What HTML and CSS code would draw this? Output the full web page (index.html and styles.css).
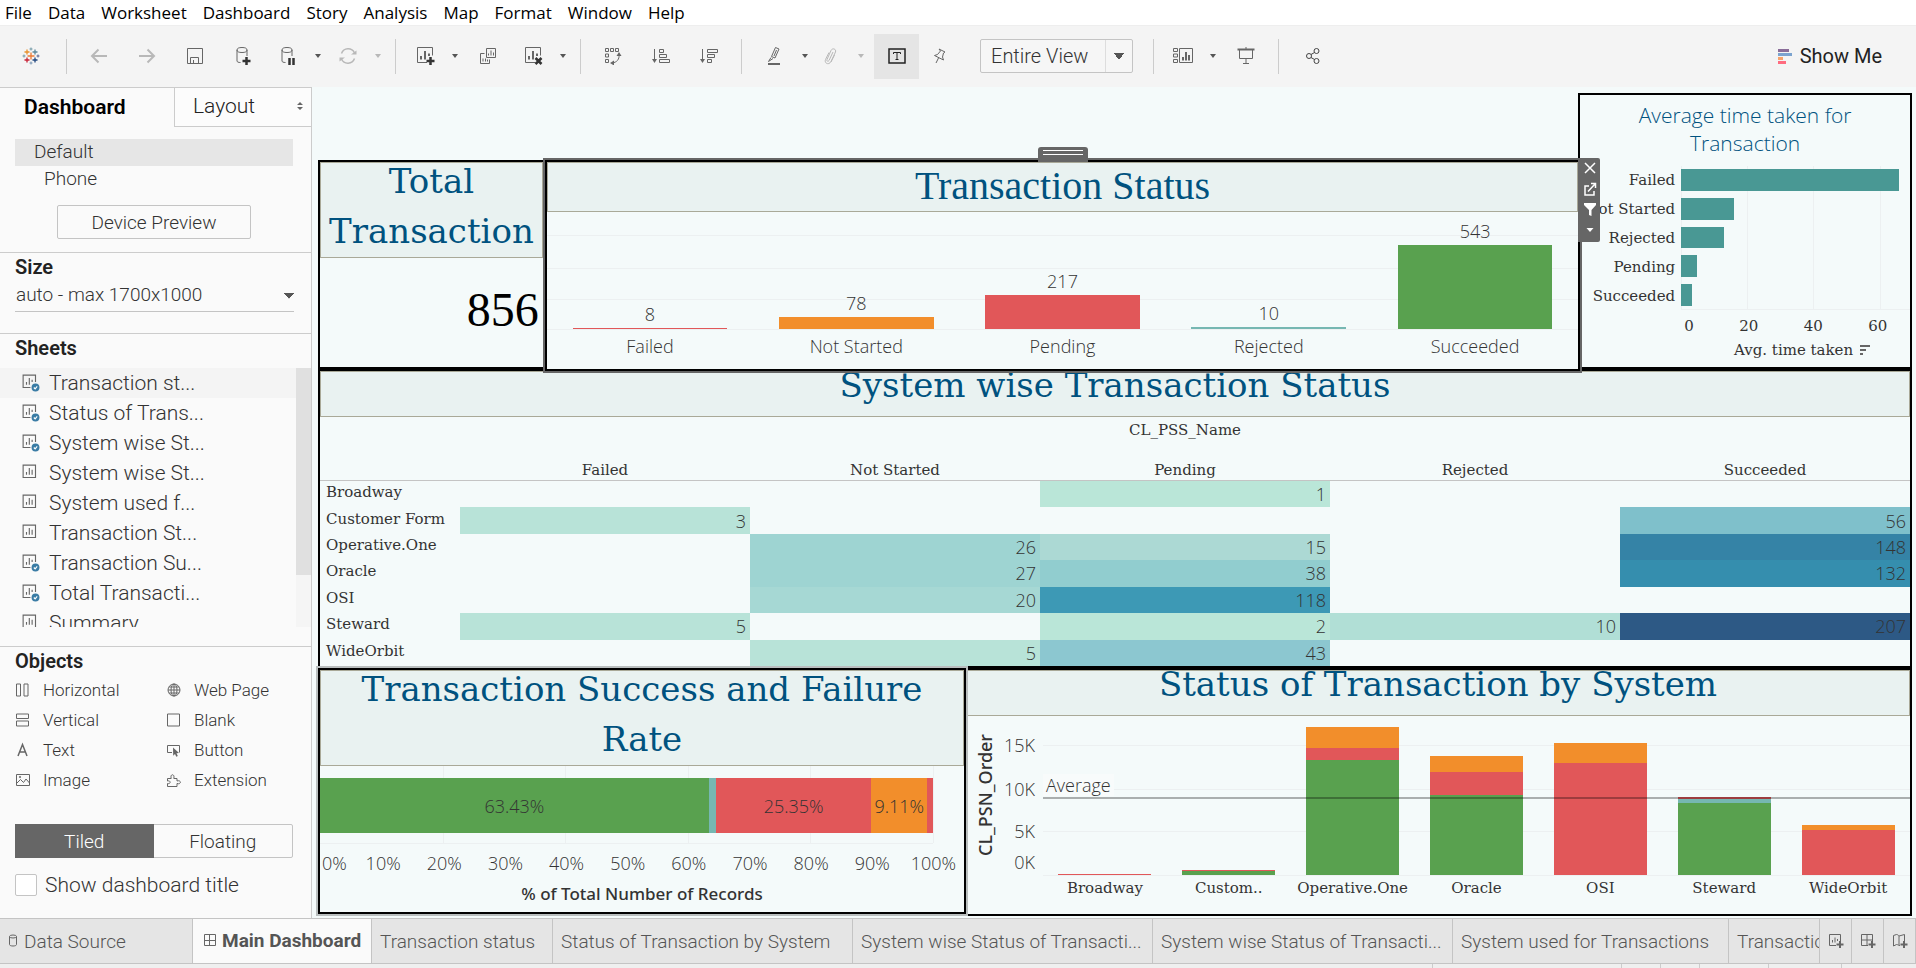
FILE: index.html
```html
<!DOCTYPE html>
<html lang="en">
<head>
<meta charset="utf-8">
<title>Main Dashboard</title>
<link rel="stylesheet" href="styles.css">
</head>
<body>
<svg class="defs" aria-hidden="true">
  <symbol id="i-sheet" viewBox="0 0 16 16"><path d="M1 1h11v11H1zM4 9.500V7M6.500 9.500V3.500M9 9.500V5"/></symbol>
  <symbol id="i-sheet-used" viewBox="0 0 16 16"><path d="M7.500 12H1V1h11v6M4 9.500V7M6.500 9.500V3.500M9 7V5"/><circle class="badge" cx="12" cy="12" r="3.500"/><path class="tick" d="M10.500 12l1.200 1.200 1.800-2.200"/></symbol>
  <symbol id="i-chart" viewBox="0 0 20 20"><path d="M12 16.500H2.500v-15h15v8"/><path stroke-width="2" d="M6 13.500V10M10 13.500V5M14 10V7.500"/></symbol>
</svg>
<div class="app">
  <nav class="menu">
    <a href="#">File</a><a href="#">Data</a><a href="#">Worksheet</a><a href="#">Dashboard</a><a href="#">Story</a><a href="#">Analysis</a><a href="#">Map</a><a href="#">Format</a><a href="#">Window</a><a href="#">Help</a>
  </nav>

  <header class="toolbar">
    <button class="tool logo" aria-label="Start page"><svg width="18" height="18" viewBox="0 0 18 18">
      <path stroke="#eb7a34" stroke-width="1.300" d="M9 5.500v7M5.500 9h7"/><path stroke="#e8912d" stroke-width="1.300" d="M5 2.500v5M2.500 5h5"/><path stroke="#5b879b" stroke-width="1.300" d="M13 2.500v5M10.500 5h5"/><path stroke="#c72035" stroke-width="1.300" d="M5 10.500v5M2.500 13h5"/><path stroke="#1f457e" stroke-width="1.300" d="M13 10.500v5M10.500 13h5"/><path stroke="#7199a6" d="M9 .5v3M7.500 2h3M2 7.500v3M.5 9h3"/><path stroke="#5b6591" d="M16 7.500v3M14.500 9h3"/><path stroke="#7a96b4" d="M9 14.500v3M7.500 16h3"/></svg></button>
    <i class="sep"></i>
    <button class="tool off" aria-label="Undo"><svg width="18" height="16" viewBox="0 0 18 16"><path stroke-width="2" d="M17 8H2M8.500 1.500L2 8l6.500 6.500"/></svg></button>
    <button class="tool off" aria-label="Redo"><svg width="18" height="16" viewBox="0 0 18 16"><path stroke-width="2" d="M1 8h15M9.500 1.500L16 8l-6.500 6.500"/></svg></button>
    <button class="tool" aria-label="Save"><svg width="18" height="18" viewBox="0 0 18 18"><path d="M1.500 1.500h15v15h-15zM4.500 16v-5.500h8V16M7.500 16v-3"/></svg></button>
    <button class="tool" aria-label="New data source"><svg width="18" height="20" viewBox="0 0 18 20"><ellipse cx="8" cy="4" rx="5" ry="2.500"/><path d="M3 4v11c0 1 1.500 1.500 3.500 1.500M13 4v6"/><path class="heavy" d="M12.500 11v8M8.500 15h8"/></svg></button>
    <button class="tool mid" aria-label="Pause updates"><svg width="18" height="20" viewBox="0 0 18 20"><ellipse cx="8" cy="4" rx="5" ry="2.500"/><path d="M3 4v11c0 1 1.500 1.500 3.500 1.500M13 4v6"/><path class="heavy" d="M10.500 12v7M14.500 12v7"/></svg></button>
    <button class="caret" aria-label="Update options"></button>
    <button class="tool mid off" aria-label="Refresh"><svg width="18" height="18" viewBox="0 0 18 18"><path stroke-width="1.500" d="M2.500 6.500a7 7 0 0 1 13-.5M15.500 11.500a7 7 0 0 1-13 .5"/><path class="fill" d="M12 7.500h5.500v-4zM6 10.500H.5v4z"/></svg></button>
    <button class="caret off" aria-label="Refresh options"></button>
    <i class="sep"></i>
    <button class="tool mid" aria-label="New worksheet"><svg width="20" height="20" viewBox="0 0 20 20"><use href="#i-chart"/><path class="heavy" d="M15.500 11v8M11.500 15h8"/></svg></button>
    <button class="caret" aria-label="New options"></button>
    <button class="tool" aria-label="Duplicate"><svg width="18" height="18" viewBox="0 0 18 18"><path d="M7.500 1.500h9v9h-9zM9.500 8.500V6.500M12 8.500v-5M14.500 8.500v-3M5.500 6.500h-4v10h9v-4M4 14.500v-3M6.500 14.500v-3M8.500 14.500v-2"/></svg></button>
    <button class="tool mid" aria-label="Clear sheet"><svg width="20" height="20" viewBox="0 0 20 20"><use href="#i-chart"/><path class="heavy" d="M12.500 12l6 6M18.500 12l-6 6"/></svg></button>
    <button class="caret" aria-label="Clear options"></button>
    <i class="sep"></i>
    <button class="tool" aria-label="Swap rows and columns"><svg width="18" height="18" viewBox="0 0 18 18"><path d="M1.500 1.500h3v3h-3zM6.500 1.500h3v3h-3zM11.500 1.500h3v3h-3zM1.500 7h3v3h-3zM1.500 12.500h3v3h-3zM15 8c.5 4-2 7.500-7 8"/><path class="fill" d="M15 5l2.500 4h-5zM6 16l4-2.500v5z"/></svg></button>
    <button class="tool" aria-label="Sort ascending"><svg width="18" height="18" viewBox="0 0 18 18"><path d="M2.500 2v12M7.500 2.500h4v3h-4zM7.500 7.500h7v3h-7zM7.500 12.500h10v3h-10z"/><path class="fill" d="M0 12h5l-2.500 4z"/></svg></button>
    <button class="tool" aria-label="Sort descending"><svg width="18" height="18" viewBox="0 0 18 18"><path d="M2.500 2v12M7.500 2.500h10v3h-10zM7.500 7.500h7v3h-7zM7.500 12.500h4v3h-4z"/><path class="fill" d="M0 12h5l-2.500 4z"/></svg></button>
    <i class="sep"></i>
    <button class="tool wide" aria-label="Highlight"><svg width="18" height="20" viewBox="0 0 18 20"><path d="M9.500 1.500l3.500 1.500-4 9-3.500-1.500zM5 11.500l-2.500 4 4.500-3M10.500 4l-2.500 6"/><path stroke-width="2" d="M2 18h12"/></svg></button>
    <button class="caret slim" aria-label="Highlight options"></button>
    <button class="tool mid off" aria-label="Group members"><svg width="18" height="18" viewBox="0 0 18 18"><path d="M11 5l-4 8.500c-.8 1.500-2.800.7-2-1L9 3.500c1.500-3 5.500-1.500 4.500 1.500L9 14.500c-2 4-7 2-5.500-2L7 5.500M12.500 8L9 15"/></svg></button>
    <button class="caret off" aria-label="Group options"></button>
    <button class="tool pressed" aria-label="Show mark labels"><svg width="18" height="18" viewBox="0 0 18 18"><path d="M1 2h16v14H1z"/><path stroke-width="1" d="M5.500 7V5.500h7V7M9 5.500v7M7.500 12.500h3"/></svg></button>
    <button class="tool mid" aria-label="Fix axes"><svg width="16" height="18" viewBox="0 0 16 18"><path d="M7 2l6 3-1.500 1-1 4 1 3-9-4.500 3-1 3-3.500zM6.500 11L4 16"/></svg></button>
    <select class="fit" aria-label="Fit"><option>Entire View</option></select>
    <i class="sep"></i>
    <button class="tool mid" aria-label="Show cards"><svg width="20" height="18" viewBox="0 0 20 18"><path d="M.5 1.500h4v3h-4zM.5 7h4v3h-4zM.5 12.500h4v3h-4zM6.500 1.500h13v14h-13z"/><path stroke-width="2" d="M10 13.500V10M13 13.500V5M16 13.500V8"/></svg></button>
    <button class="caret" aria-label="Card options"></button>
    <button class="tool" aria-label="Presentation mode"><svg width="18" height="18" viewBox="0 0 18 18"><path d="M2.500 3v8.500h13V3M9 12v5M6 16.500h6M9 0v2"/><path stroke-width="2" d="M.5 2.500h17"/></svg></button>
    <i class="sep"></i>
    <button class="tool share" aria-label="Share"><svg width="16" height="18" viewBox="0 0 16 18"><circle cx="4" cy="9" r="2.500"/><circle cx="11.500" cy="4" r="2.500"/><circle cx="11.500" cy="14" r="2.500"/><path d="M6 7.500L9.500 5.500M6 10.500l3.500 2"/></svg></button>
    <button class="showme"><svg width="14" height="16" viewBox="0 0 14 16" shape-rendering="crispEdges"><path fill="#8a6d99" stroke="none" d="M0 1h11v3H0z"/><path fill="#7ba3cf" stroke="none" d="M0 5h14v3H0z"/><path fill="#f5a26b" stroke="none" d="M0 9h5v3H0z"/><path fill="#ff6b7f" stroke="none" d="M0 13h8v3H0z"/></svg>Show Me</button>
  </header>

  <div class="body">
    <aside class="side">
      <div class="tabs"><button class="tab on">Dashboard</button><button class="tab">Layout <svg width="6" height="8" viewBox="0 0 6 8"><path class="fill" d="M0 3l3-3 3 3zM0 5l3 3 3-3z"/></svg></button></div>
      <section class="devices">
        <div class="device on">Default</div>
        <div class="device sub">Phone</div>
        <button class="preview">Device Preview</button>
      </section>
      <section class="size">
        <h2>Size</h2>
        <select class="sizesel" aria-label="Size"><option>auto - max 1700x1000</option></select>
      </section>
      <section class="sheets">
        <h2>Sheets</h2>
        <div class="scroller">
          <ul>
            <li class="on"><svg width="18" height="18"><use href="#i-sheet-used"/></svg>Transaction st...</li>
            <li><svg width="18" height="18"><use href="#i-sheet-used"/></svg>Status of Trans...</li>
            <li><svg width="18" height="18"><use href="#i-sheet-used"/></svg>System wise St...</li>
            <li><svg width="18" height="18"><use href="#i-sheet"/></svg>System wise St...</li>
            <li><svg width="18" height="18"><use href="#i-sheet"/></svg>System used f...</li>
            <li><svg width="18" height="18"><use href="#i-sheet"/></svg>Transaction St...</li>
            <li><svg width="18" height="18"><use href="#i-sheet-used"/></svg>Transaction Su...</li>
            <li><svg width="18" height="18"><use href="#i-sheet-used"/></svg>Total Transacti...</li>
            <li><svg width="18" height="18"><use href="#i-sheet"/></svg>Summary</li>
          </ul>
          <div class="track"><div class="thumb"></div></div>
        </div>
      </section>
      <section class="objects">
        <h2>Objects</h2>
        <div class="objgrid">
          <div><svg width="16" height="16" viewBox="0 0 16 16"><path d="M1.500 2h4v12h-4zM9 2h4v12H9z"/></svg>Horizontal</div>
          <div><svg width="16" height="16" viewBox="0 0 16 16"><circle cx="8" cy="8" r="6"/><ellipse cx="8" cy="8" rx="3" ry="6"/><path d="M8 2v12M2 8h12M3 5h10M3 11h10"/></svg>Web Page</div>
          <div><svg width="16" height="16" viewBox="0 0 16 16"><path d="M1.500 2h12v4.500h-12zM1.500 9h12v5h-12z"/></svg>Vertical</div>
          <div><svg width="16" height="16" viewBox="0 0 16 16"><path d="M1.500 2h12v12h-12z"/></svg>Blank</div>
          <div><svg width="16" height="16" viewBox="0 0 16 16"><path stroke-width="1.500" d="M3 14L7.500 2.500 12 14M4.500 10h6"/></svg>Text</div>
          <div><svg width="16" height="16" viewBox="0 0 16 16"><path d="M6 10.500H1.500v-7h12v7"/><path class="fill" d="M7 5.500l6 5.500-2.500.3 1.300 2.700-1.500.7-1.300-2.700-1.800 1.700z"/></svg>Button</div>
          <div><svg width="16" height="16" viewBox="0 0 16 16"><path d="M1.500 2.500h13v11h-13zM2 11l3.500-3.500 3 3L11 7l3.500 4"/><circle cx="5" cy="5" r=".7"/></svg>Image</div>
          <div><svg width="16" height="16" viewBox="0 0 16 16"><path d="M1.500 6.500h3.700c-1.500-5 4-5 2.600 0H11V9c4.500-1.500 4.500 4 0 2.500v3H1.500v-3c3.500 1 3.500-3.500 0-2.500z"/></svg>Extension</div>
        </div>
        <div class="toggle"><button class="on">Tiled</button><button>Floating</button></div>
        <label class="check"><input type="checkbox">Show dashboard title</label>
      </section>
    </aside>

    <main class="canvas">
      <div class="top">
        <section class="panel total">
          <h3 class="double">Total<br>Transaction</h3>
          <p class="big">856</p>
        </section>
        <section class="panel status">
          <h3>Transaction Status</h3>
          <div class="plot">
            <i class="h" style="top:20%"></i><i class="h" style="top:47.500%"></i><i class="h" style="top:74%"></i><i class="h" style="top:100%"></i>
            <div class="col"><b>8</b><i class="bar red" style="height:1%"></i></div>
            <div class="col"><b>78</b><i class="bar orange" style="height:10.300%"></i></div>
            <div class="col"><b>217</b><i class="bar red" style="height:28.700%"></i></div>
            <div class="col"><b>10</b><i class="bar teal" style="height:1.700%"></i></div>
            <div class="col"><b>543</b><i class="bar green" style="height:72%"></i></div>
          </div>
          <div class="cats"><span>Failed</span><span>Not Started</span><span>Pending</span><span>Rejected</span><span>Succeeded</span></div>
          <div class="grip"></div>
          <div class="actions">
            <button aria-label="Remove"><svg width="14" height="14" viewBox="0 0 14 14"><path stroke-width="1.500" d="M2 2l10 10M12 2L2 12"/></svg></button>
            <button aria-label="Go to sheet"><svg width="14" height="14" viewBox="0 0 14 14"><path stroke-width="1.500" d="M6 4H2v9h9V9M5 9.500L12 2M8 1.500h4.500V6"/></svg></button>
            <button aria-label="Use as filter"><svg width="14" height="14" viewBox="0 0 14 14"><path class="fill" d="M1 1h12v2L8.500 8v6L6 13V8L1 3z"/></svg></button>
            <button aria-label="More options"><svg width="14" height="14" viewBox="0 0 14 14"><path class="fill" d="M3.500 5h7L7 9z"/></svg></button>
          </div>
        </section>
        <section class="panel average">
          <h4>Average time taken for<br>Transaction</h4>
          <div class="hchart">
            <div class="names"><span>Failed</span><span>Not Started</span><span>Rejected</span><span>Pending</span><span>Succeeded</span></div>
            <div class="hplot">
              <i class="v" style="left:0"></i><i class="v" style="left:28.800%"></i><i class="v" style="left:57.600%"></i><i class="v" style="left:87%"></i>
              <i class="hbar" style="width:95.200%"></i><i class="hbar" style="width:23.100%"></i><i class="hbar" style="width:18.800%"></i><i class="hbar" style="width:7%"></i><i class="hbar" style="width:4.800%"></i>
            </div>
          </div>
          <div class="haxis"><span class="zero">0</span><span>20</span><span>40</span><span>60</span></div>
          <div class="hname">Avg. time taken <svg width="12" height="12" viewBox="0 0 12 12"><path stroke-width="2" d="M1 2h10M1 6h6M1 10h3"/></svg></div>
        </section>
      </div>

      <section class="panel system">
        <h3 class="tight">System wise Transaction Status</h3>
        <table>
          <colgroup><col class="rowname"><col><col><col><col><col></colgroup>
          <thead>
            <tr class="dim"><th></th><th colspan="5">CL_PSS_Name</th></tr>
            <tr><th></th><th>Failed</th><th>Not Started</th><th>Pending</th><th>Rejected</th><th>Succeeded</th></tr>
          </thead>
          <tbody>
            <tr><th>Broadway</th><td></td><td></td><td class="c1">1</td><td></td><td></td></tr>
            <tr><th>Customer Form</th><td class="c2">3</td><td></td><td></td><td></td><td class="c9">56</td></tr>
            <tr><th>Operative.One</th><td></td><td class="c5">26</td><td class="c4">15</td><td></td><td class="c12">148</td></tr>
            <tr><th>Oracle</th><td></td><td class="c5">27</td><td class="c7">38</td><td></td><td class="c11">132</td></tr>
            <tr><th>OSI</th><td></td><td class="c6">20</td><td class="c10">118</td><td></td><td></td></tr>
            <tr><th>Steward</th><td class="c2">5</td><td></td><td class="c1">2</td><td class="c3">10</td><td class="c13">207</td></tr>
            <tr><th>WideOrbit</th><td></td><td class="c2">5</td><td class="c8">43</td><td></td><td></td></tr>
          </tbody>
        </table>
      </section>

      <div class="bottom">
        <section class="panel rate">
          <h3 class="double">Transaction Success and Failure<br>Rate</h3>
          <div class="rplot">
            <i class="v" style="left:20%"></i><i class="v" style="left:40%"></i><i class="v" style="left:60%"></i><i class="v" style="left:80%"></i><i class="v" style="left:100%"></i>
            <div class="stack"><span class="green" style="width:63.430%">63.43%</span><span class="teal" style="width:1.170%"></span><span class="red" style="width:25.350%">25.35%</span><span class="orange" style="width:9.110%">9.11%</span><span class="red" style="width:.940%"></span></div>
          </div>
          <div class="raxis"><span class="zero">0%</span><span>10%</span><span>20%</span><span>30%</span><span>40%</span><span>50%</span><span>60%</span><span>70%</span><span>80%</span><span>90%</span><span>100%</span></div>
          <div class="rname">% of Total Number of Records</div>
        </section>
        <section class="panel bysystem">
          <h3 class="tight">Status of Transaction by System</h3>
          <div class="sbody">
            <div class="yname">CL_PSN_Order</div>
            <div class="splot">
              <i class="h" style="top:18%"><em>15K</em></i><i class="h" style="top:45.600%"><em>10K</em></i><i class="h" style="top:72.500%"><em>5K</em></i><i class="h base" style="top:100%"><em>0K</em></i>
              <div class="col"><i class="bar red" style="height:.800%"></i></div>
              <div class="col"><i class="bar red" style="height:.700%"></i><i class="bar green" style="height:2.300%"></i></div>
              <div class="col"><i class="bar orange" style="height:13.200%"></i><i class="bar red" style="height:7.500%"></i><i class="bar green" style="height:72.500%"></i></div>
              <div class="col"><i class="bar orange" style="height:10%"></i><i class="bar red" style="height:14.300%"></i><i class="bar green" style="height:50.600%"></i></div>
              <div class="col"><i class="bar orange" style="height:12.500%"></i><i class="bar red" style="height:70.600%"></i></div>
              <div class="col"><i class="bar red" style="height:1.300%"></i><i class="bar teal" style="height:2.500%"></i><i class="bar green" style="height:45%"></i></div>
              <div class="col"><i class="bar orange" style="height:3.100%"></i><i class="bar red" style="height:28.100%"></i></div>
              <div class="avgline" style="bottom:47.500%"><span>Average</span></div>
            </div>
            <div class="scats"><span>Broadway</span><span>Custom..</span><span>Operative.One</span><span>Oracle</span><span>OSI</span><span>Steward</span><span>WideOrbit</span></div>
          </div>
        </section>
      </div>
    </main>
  </div>

  <footer class="sheetbar">
    <button class="source"><svg width="10" height="16" viewBox="0 0 10 16"><ellipse cx="5" cy="3.500" rx="3.500" ry="1.500"/><path d="M1.500 3.500v8c0 2 7 2 7 0v-8"/></svg>Data Source</button>
    <button class="main"><svg width="12" height="12" viewBox="0 0 12 12"><path d="M.5 .5h11v11H.5zM5.500 1v10M.5 6.500h11"/></svg>Main Dashboard</button>
    <button class="t1">Transaction status</button>
    <button class="t2">Status of Transaction by System</button>
    <button class="t2">System wise Status of Transacti...</button>
    <button class="t2">System wise Status of Transacti...</button>
    <button class="t3">System used for Transactions</button>
    <button class="t4">Transaction Success</button>
    <button class="add" aria-label="New worksheet"><svg width="16" height="16" viewBox="0 0 16 16"><path d="M8 12.500H1.500v-11h11V8M4.500 9.500V7M7 9.500V4.500M9.500 8V6"/><path stroke-width="2" d="M12 8v7M8.500 11.500h7"/></svg></button>
    <button class="add" aria-label="New dashboard"><svg width="16" height="16" viewBox="0 0 16 16"><path d="M8 12.500H1.500v-11h11V8M7 1.500v11M1.500 7h11"/><path stroke-width="2" d="M12 8v7M8.500 11.500h7"/></svg></button>
    <button class="add" aria-label="New story"><svg width="16" height="16" viewBox="0 0 16 16"><path d="M8 12.500c-2 0-2-1-3.500-1l-3 1.500V2.500l3-1C6 1.500 7 3 7 3v9M7 3l5.500-1.500V8"/><path stroke-width="2" d="M12 8v7M8.500 11.500h7"/></svg></button>
  </footer>
  <div class="strip"><i class="s1"></i><i class="s2"></i><i class="s3"></i><i class="s3"></i><i class="s4"></i><i class="s4"></i></div>
</div>
</body>
</html>
```
FILE: styles.css
```css
* { box-sizing: border-box; }
body { margin: 0; font-family: Roboto, "Liberation Sans", sans-serif; font-weight: 300; color: #333; }
button, select, input { font: inherit; color: inherit; margin: 0; }
button { border: 0; background: none; padding: 0; }
svg { fill: none; stroke: #666; stroke-width: 1; flex: none; }
svg .fill { fill: #666; stroke: none; }
svg .heavy { stroke: #333; stroke-width: 2.500; }
.defs { position: absolute; width: 0; height: 0; }
.badge { fill: #3a7ca5; stroke: none; }
.tick { stroke: #fff; }
i, em { font-style: normal; }
h2, h3, h4, p, ul { margin: 0; padding: 0; }

.app { height: 100vh; display: flex; flex-direction: column; overflow: hidden; background: #fafafa; }

.menu { flex: none; height: 26px; display: flex; align-items: center; gap: 16px; padding: 0 5px; background: #fff; font-family: "Open Sans", sans-serif; font-size: 17px; font-weight: 400; line-height: 20px; border-bottom: 1px solid #eee; }
.menu a { color: #000; text-decoration: none; }

.toolbar { flex: none; height: 61px; display: flex; align-items: center; padding-bottom: 1px; background: #f4f4f4; }
.tool { flex: none; width: 48px; height: 45px; display: flex; align-items: center; justify-content: center; }
.tool.mid { width: 42px; }
.tool.wide { width: 50px; }
.tool.share { width: 52px; }
.tool.share svg { stroke: #444; }
.tool.logo { width: 58px; padding-left: 4px; }
.tool.pressed { width: 45px; margin-left: 4px; background: #e5e5e5; }
.tool.pressed svg { stroke: #222; stroke-width: 1.500; }
.tool.off svg { stroke: #b8b8b8; }
.tool.off .fill { fill: #b8b8b8; }
.caret { flex: none; width: 18px; height: 45px; display: flex; align-items: center; justify-content: center; }
.caret.slim { width: 10px; }
.caret::before { content: ""; border: 3px solid transparent; border-top: 4px solid #555; border-bottom: 0; }
.caret.off::before { border-top-color: #b8b8b8; }
.sep { flex: none; width: 1px; height: 35px; margin: 0 8px; background: #ccc; }
.fit { width: 153px; height: 34px; margin: 0 12px 0 19px; padding: 0 10px; appearance: none; border: 1px solid #c4c4c4; border-radius: 2px; font-size: 20px; color: #333; background: linear-gradient(#ddd, #ddd) right 26px top 0 / 1px 100% no-repeat, linear-gradient(to bottom left, #555 50%, transparent 51%) right 13px center / 5px 7px no-repeat, linear-gradient(to bottom right, #555 50%, transparent 51%) right 8px center / 5px 7px no-repeat, #f6f6f6; }
.showme { margin-left: auto; margin-right: 34px; display: flex; align-items: center; gap: 8px; font-size: 20px; font-weight: 400; color: #222; }

.body { flex: 1; min-height: 0; display: flex; }
.side { flex: none; width: 312px; display: flex; flex-direction: column; border-right: 1px solid #ccc; border-top: 1px solid #ccc; font-size: 19px; }
.side section { border-bottom: 1px solid #ccc; }
.side section:last-child { border-bottom: 0; }
.side h2 { font-size: 20px; line-height: 28px; font-weight: 600; color: #222; padding-left: 15px; }
.tabs { height: 39px; display: flex; font-size: 21px; color: #222; }
.tab { flex: none; width: 137px; display: flex; align-items: center; justify-content: space-between; padding: 0 8px 2px 18px; border-left: 1px solid #ccc; border-bottom: 1px solid #ccc; background: #fcfcfc; }
.tab.on { flex: 1; padding-left: 24px; border: 0; background: none; font-weight: 600; color: #000; }
.devices { height: 126px; padding: 12px 18px 0 15px; }
.device { height: 27px; line-height: 26px; padding-left: 19px; }
.device.sub { padding-left: 29px; }
.device.on { background: #e6e6e6; }
.preview { display: block; width: 194px; height: 34px; margin: 12px 0 0 42px; border: 1px solid #c4c4c4; border-radius: 2px; font-size: 19px; }
.size { height: 81px; }
.sizesel { display: block; width: 279px; height: 31px; margin: 0 0 0 15px; padding: 0 0 4px 1px; appearance: none; border: 0; border-bottom: 1px solid #c4c4c4; border-radius: 0; background: linear-gradient(to bottom left, #555 50%, transparent 51%) right 5px center / 5px 6px no-repeat, linear-gradient(to bottom right, #555 50%, transparent 51%) right 0 center / 5px 6px no-repeat; }
.sheets { flex: 1; min-height: 0; padding-bottom: 19px; display: flex; flex-direction: column; }
.sheets h2 { flex: none; padding-bottom: 6px; }
.scroller { flex: 1; min-height: 0; display: flex; overflow: hidden; }
.scroller ul { flex: 1; list-style: none; }
.scroller li { height: 30px; display: flex; align-items: center; gap: 9px; padding-left: 22px; font-size: 21px; }
.scroller li.on { background: #f4f4f4; }
.track { width: 15px; background: #f5f5f5; }
.thumb { height: 80%; background: #e0e0e0; }
.objects { flex: none; height: 271px; }
.objgrid { display: grid; grid-template-columns: 151px 1fr; grid-auto-rows: 30px; padding-left: 15px; font-size: 17px; }
.objgrid div { display: flex; align-items: center; gap: 12px; }
.toggle { display: flex; height: 34px; margin: 29px 18px 0 15px; border: 1px solid #c4c4c4; border-radius: 2px; font-size: 19px; }
.toggle button { flex: 1; }
.toggle .on { background: #666; color: #fff; margin: -1px 0 -1px -1px; }
label.check { display: flex; align-items: center; gap: 8px; margin: 16px 0 0 15px; font-size: 21px; line-height: 22px; }
.check input { appearance: none; width: 22px; height: 22px; border: 1px solid #c4c4c4; border-radius: 2px; background: #fff; }

.canvas { flex: 1; min-width: 0; display: grid; grid-template-rows: minmax(0, 276fr) minmax(0, 299fr) minmax(0, 248fr); padding: 6px 4px 2px 6px; background: #f4fafa; }
.top { display: grid; grid-template-columns: minmax(0, 227fr) minmax(0, 1034fr) minmax(0, 334fr); min-height: 0; }
.bottom { display: grid; grid-template-columns: minmax(0, 648fr) minmax(0, 946fr); min-height: 0; }
.panel { display: flex; flex-direction: column; min-width: 0; min-height: 0; border: 2px solid #000; background: #f4fafa; }
h3 { flex: none; height: 46px; display: flex; align-items: center; justify-content: center; text-align: center; border: 1px solid #a9a998; background: #e9f2f1; color: #00527f; font-family: "DejaVu Serif", serif; font-size: 34px; font-weight: 400; line-height: 50px; white-space: nowrap; }
h3.double { height: 96px; padding-bottom: 8px; }
h3.tight { padding-bottom: 18px; line-height: 26px; }
.total, .status { margin-top: 67px; }
.big { text-align: right; padding: 20px 4px 0; font-family: "Liberation Serif", serif; font-size: 48px; line-height: 64px; color: #000; }

.status { position: relative; z-index: 2; margin-right: -2px; margin-bottom: -2px; box-shadow: 0 0 0 2px #666; }
.status h3 { height: 50px; padding-bottom: 2px; font-family: "Liberation Serif", serif; font-size: 40px; line-height: 46px; }
.plot, .splot { position: relative; display: flex; flex: 1; min-height: 0; }
.h { position: absolute; left: 0; right: 0; height: 1px; background: #ecf0f1; }
.v { position: absolute; top: 0; bottom: 0; width: 1px; background: #ecf0f1; }
.col { position: relative; flex: 1; height: 100%; display: flex; flex-direction: column; align-items: center; justify-content: flex-end; }
.col b { font-family: "Open Sans", sans-serif; font-weight: 300; font-size: 18px; line-height: 28px; color: #333; }
.bar { flex: none; width: 75%; min-height: 1px; }
.red { background: #e15759; }
.orange { background: #f28e2b; }
.teal { background: #76b7b2; }
.green { background: #59a14f; }
.cats { flex: none; display: flex; height: 40px; font-family: "Open Sans", sans-serif; font-size: 18px; line-height: 34px; }
.cats span, .scats span { flex: 1; text-align: center; white-space: nowrap; }
.grip { position: absolute; left: 50%; bottom: 100%; width: 50px; height: 15px; margin-left: -25px; border-radius: 3px 3px 0 0; background: linear-gradient(#fff, #fff) center 3px / 40px 1px no-repeat, linear-gradient(#fff, #fff) center 7px / 40px 1px no-repeat, #666; }
.actions { position: absolute; left: 100%; top: -4px; width: 22px; height: 84px; padding: 0 0 2px 2px; display: flex; flex-direction: column; background: #666; border-radius: 0 2px 2px 0; }
.actions button { flex: 1; display: flex; align-items: center; justify-content: center; }
.actions svg { stroke: #fff; }
.actions .fill { fill: #fff; }

.average { padding-top: 6px; font-family: "DejaVu Serif", serif; font-size: 15px; font-weight: 400; }
h4 { flex: none; text-align: center; font-family: "Open Sans", sans-serif; font-size: 21px; font-weight: 300; line-height: 28px; color: #00527f; white-space: nowrap; }
.hchart { flex: 1; min-height: 0; display: flex; padding-top: 9px; }
.names { flex: none; width: 101px; display: grid; grid-auto-rows: 1fr; align-items: center; padding-right: 6px; white-space: nowrap; }
.names span { justify-self: end; }
.hplot { position: relative; flex: 1; display: grid; grid-auto-rows: 1fr; align-items: center; border-bottom: 1px solid #ecf0f1; }
.hbar { position: relative; height: 76%; background: #499894; }
.haxis { flex: none; display: flex; height: 28px; line-height: 32px; padding-left: 101px; }
.haxis span { flex: 1; text-align: center; }
.haxis .zero { flex: .500; text-align: left; padding-left: 3px; }
.hname { flex: none; height: 29px; line-height: 24px; display: flex; justify-content: center; align-items: flex-start; gap: 6px; padding-left: 115px; white-space: nowrap; }
.hname svg { margin-top: 6px; }

table { flex: 1; min-height: 0; width: 100%; border-collapse: collapse; table-layout: fixed; font-family: "DejaVu Serif", serif; font-size: 15px; line-height: 20px; }
.rowname { width: 140px; }
table th { font-weight: 400; padding: 0; vertical-align: bottom; white-space: nowrap; }
table .dim th { height: 43px; vertical-align: top; padding-top: 3px; }
thead { border-bottom: 1px solid #c4c4c4; }
tbody th { text-align: left; padding: 0 0 4px 6px; vertical-align: middle; }
tbody td { padding: 0 4px 0 0; text-align: right; font-family: "Open Sans", sans-serif; font-size: 18px; font-weight: 300; }
.c1 { background: #bae6d8; }
.c2 { background: #b8e3d8; }
.c3 { background: #b1dfd6; }
.c4 { background: #acd9d4; }
.c5 { background: #9ed4d2; }
.c6 { background: #a6d8d4; }
.c7 { background: #91cdcf; }
.c8 { background: #8cc7d0; }
.c9 { background: #7fc0cb; }
.c10 { background: #3d99b5; }
.c11 { background: #358eae; }
.c12 { background: #3583a6; }
.c13 { background: #2d5985; }

.rate { position: relative; z-index: 1; margin-bottom: 2px; box-shadow: 0 0 0 2px #b9bebe; }
.rplot { position: relative; flex: 1; min-height: 0; margin-right: 31px; padding: 12px 0 10px; border-bottom: 1px solid #ecf0f1; }
.stack { position: relative; height: 100%; display: flex; }
.stack span { display: flex; align-items: center; justify-content: center; font-family: "Open Sans", sans-serif; font-size: 18px; }
.raxis { flex: none; display: flex; height: 35px; line-height: 38px; font-family: "Open Sans", sans-serif; font-size: 18px; }
.raxis span { flex: 1; text-align: center; }
.raxis .zero { flex: .500; text-align: left; padding-left: 2px; }
.rname { flex: none; height: 33px; line-height: 30px; text-align: center; font-family: "Noto Sans", sans-serif; font-size: 17px; font-weight: 500; }

.sbody { flex: 1; min-height: 0; display: grid; grid-template-columns: 77px 1fr; grid-template-rows: minmax(0, 1fr) 39px; }
.yname { writing-mode: vertical-rl; rotate: 180deg; justify-self: start; width: 28px; line-height: 28px; margin-left: 5px; text-align: center; font-family: "Noto Sans", sans-serif; font-size: 18px; font-weight: 500; }
.h em { position: absolute; right: 100%; top: -14px; padding-right: 8px; line-height: 28px; font-family: "Open Sans", sans-serif; font-size: 18px; }
.h.base em { top: -27px; }
.scats { grid-column: 2; display: flex; font-family: "DejaVu Serif", serif; font-size: 15px; font-weight: 400; line-height: 26px; }
.bysystem { margin-left: -2px; }
.avgline { position: absolute; left: 0; right: 0; height: 2px; background: rgba(0, 0, 0, .3); }
.avgline span { position: absolute; left: 0; bottom: 3px; padding: 0 3px; background: #f8fbfb; font-family: "Open Sans", sans-serif; font-size: 18px; line-height: 22px; }

.sheetbar { flex: none; height: 46px; display: flex; border-top: 1px solid #c4c4c4; border-bottom: 1px solid #c4c4c4; background: #e5e5e5; font-size: 19px; color: #555; }
.sheetbar button { flex: none; display: flex; align-items: center; gap: 6px; padding: 0 8px; border-right: 1px solid #c4c4c4; overflow: hidden; white-space: nowrap; }
.sheetbar .source { width: 193px; }
.sheetbar .main { width: 179px; padding: 0 0 2px 11px; background: #fafafa; font-weight: 700; }
.sheetbar .t1 { width: 181px; }
.sheetbar .t2 { width: 300px; }
.sheetbar .t3 { width: 276px; }
.sheetbar .t4 { flex: 1; min-width: 0; }
.sheetbar .add { width: 32px; padding: 0 8px; }
.strip { flex: none; height: 4px; display: flex; justify-content: flex-end; padding-right: 74px; background: #efefef; }
.strip i { border-left: 1px solid #ccc; }
.s1 { width: 189px; }
.s2, .s3 { width: 39px; }
.s3 + .s3 { width: 69px; }
.s4 { width: 73px; }
.s4 + .s4 { width: 0; }
```
